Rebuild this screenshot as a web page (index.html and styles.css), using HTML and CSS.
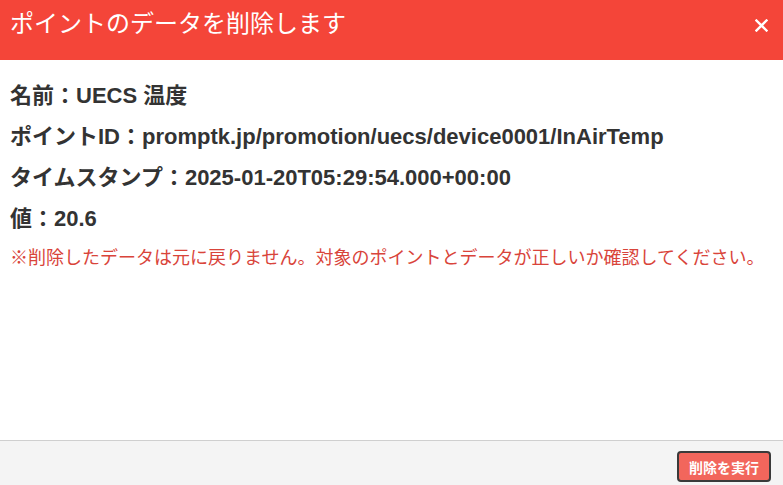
FILE: index.html
```html
<!DOCTYPE html>
<html lang="ja">
<head>
<meta charset="utf-8">
<link rel="stylesheet" href="styles.css">
</head>
<body>
<div class="dialog">
  <header class="head">
    <h1 class="title">ポイントのデータを削除します</h1>
    <svg class="close" width="13" height="13" viewBox="0 0 13 13" aria-label="閉じる"><path d="M1.5 1.5 L11.5 11.5 M11.5 1.5 L1.5 11.5" stroke="#fff" stroke-width="2.4" stroke-linecap="square" fill="none"/></svg>
  </header>
  <main class="content">
    <p class="row">名前：UECS 温度</p>
    <p class="row">ポイントID：promptk.jp/promotion/uecs/device0001/InAirTemp</p>
    <p class="row">タイムスタンプ：2025-01-20T05:29:54.000+00:00</p>
    <p class="row">値：20.6</p>
    <p class="warn">※削除したデータは元に戻りません。対象のポイントとデータが正しいか確認してください。</p>
  </main>
  <footer class="foot">
    <button class="exec">削除を実行</button>
  </footer>
</div>
</body>
</html>
```
FILE: styles.css
```css
html, body { margin: 0; padding: 0; }
body {
  font-family: "Liberation Sans", "Noto Sans CJK JP", sans-serif;
  background: #fff;
}
.dialog {
  width: 783px;
  height: 485px;
  display: flex;
  flex-direction: column;
}
.head {
  height: 60px;
  background: #f44539;
  display: flex;
  align-items: flex-start;
  justify-content: space-between;
  padding: 8px 15px 0 10px;
  box-sizing: border-box;
}
.title {
  margin: 0;
  color: #fff;
  font-size: 24px;
  font-weight: 400;
  line-height: 32px;
}
.close {
  display: block;
  margin-top: 11px;
}
.content {
  flex: 1;
  padding: 23px 10px 0;
  box-sizing: border-box;
}
.row {
  margin: 0 0 15px;
  font-size: 22px;
  font-weight: 700;
  color: #333;
  line-height: 26px;
}
.warn {
  margin: 0;
  font-size: 18px;
  color: #d9443a;
  line-height: 22px;
}
.foot {
  height: 45px;
  border-top: 1px solid #cfcfcf;
  background: #f4f4f4;
  display: flex;
  justify-content: flex-end;
  align-items: flex-start;
  padding: 10px 12px 0;
  box-sizing: border-box;
}
.exec {
  font-family: "Liberation Sans", "Noto Sans CJK JP", sans-serif;
  background: #f2665c;
  color: #fff;
  font-weight: 700;
  font-size: 14px;
  border: 2px solid #3a3a3a;
  border-radius: 4px;
  width: 94px;
  height: 31px;
  padding: 0;
}
```
